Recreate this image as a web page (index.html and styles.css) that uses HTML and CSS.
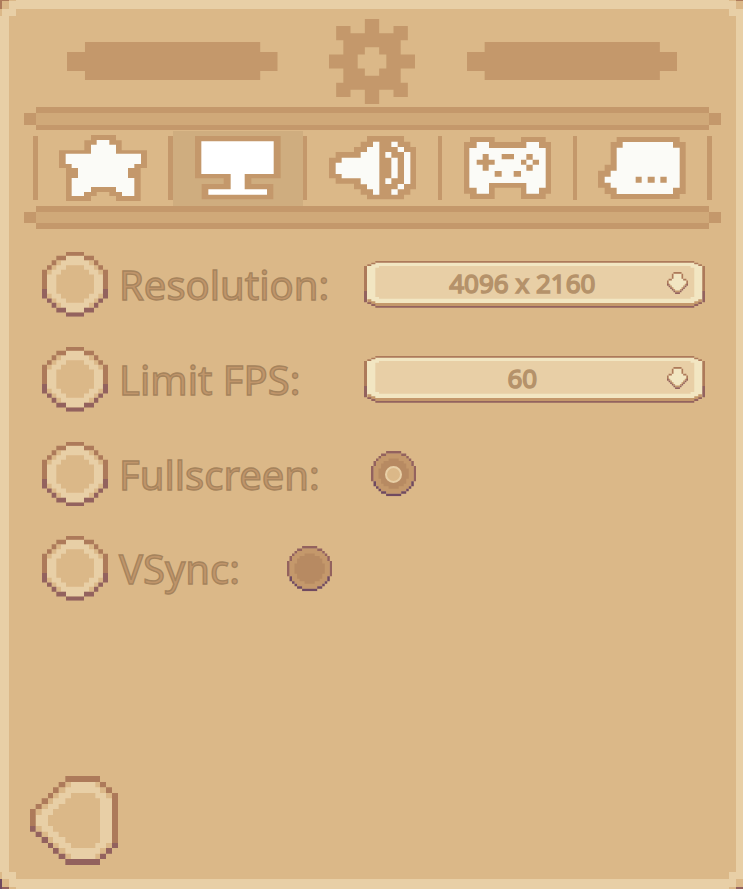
FILE: index.html
```html
<!DOCTYPE html>
<html lang="en">
<head>
<meta charset="utf-8">
<title>Display settings</title>
<link rel="stylesheet" href="styles.css">
</head>
<body>
<svg class="defs" width="0" height="0">
  <symbol id="knob" viewBox="35 36 199 194" preserveAspectRatio="none">
    <path class="light" d="M107 47H161V61H191V76H204V89H218V175H204V188H191V203H161V217H107V203H78V188H64V175H50V89H64V76H78V61H107Z"/>
    <path class="tan" d="M107 76H161V89H176V103H191V161H176V175H161V188H107V175H92V161H78V103H92V89H107Z"/>
    <path class="tan" d="M78 61H92V76H78ZM64 76H78V89H64ZM50 89H64V103H50ZM176 61H191V76H176ZM191 76H204V89H191ZM204 89H218V103H204ZM50 161H64V175H50ZM64 175H78V188H64ZM78 188H92V203H78ZM204 161H218V175H204ZM191 175H204V188H191ZM176 188H191V203H176Z"/>
    <path class="brown" d="M107 36H161V47H107ZM78 47H107V61H78ZM161 47H191V61H161ZM64 61H78V76H64ZM191 61H204V76H191ZM50 76H64V89H50ZM204 76H218V89H204ZM35 89H50V147H35ZM218 89H234V147H218Z"/>
    <path class="plum" d="M35 147H50V175H35ZM218 147H234V175H218ZM50 175H64V188H50ZM204 175H218V188H204ZM64 188H78V203H64ZM191 188H204V203H191ZM78 203H107V217H78ZM161 203H191V217H161ZM107 217H161V230H107Z"/>
  </symbol>
  <symbol id="field" viewBox="25 33 1026 141" preserveAspectRatio="none">
    <path class="cream" d="M59 36H1017V42H1034V48H1044V157H1029V168H47V157H32V48H42V42H59Z"/>
    <path class="light" d="M70 48H1006V53H1017V141H1006V146H70V141H59V53H70Z"/>
    <path class="dark" d="M59 159H1017V154H1029V148H1040V160H1029V168H47V160H35V148H47V154H59Z"/>
    <path class="brown" d="M59 33H1017V38H59ZM47 38H59V43H47ZM35 43H47V48H35ZM1017 38H1029V43H1017ZM1029 43H1040V48H1029ZM25 48H34V123H25ZM1041 48H1051V123H1041Z"/>
    <path class="plum" d="M25 123H34V157H25ZM1041 123H1051V157H1041ZM35 157H47V162H35ZM47 162H59V168H47ZM1029 157H1040V162H1029ZM1017 162H1029V168H1017ZM59 168H1017V173H59Z"/>
  </symbol>
  <symbol id="arrow" viewBox="0 0 13 13" preserveAspectRatio="none">
    <path class="cream" d="M4 1H9V4H11V5H12V8H11V9H10V10H9V11H8V12H5V11H4V10H3V9H2V8H1V5H2V4H4Z"/>
    <path class="dark" d="M1 7H2V8H3V9H4V10H5V11H8V10H9V9H10V8H11V7H12V8H11V9H10V10H9V11H8V12H5V11H4V10H3V9H2V8H1Z"/>
    <path class="brown" d="M4 0H9V1H4ZM3 1H4V4H3ZM9 1H10V4H9ZM1 4H3V5H1ZM10 4H12V5H10ZM0 5H1V8H0ZM12 5H13V8H12Z"/>
    <path class="plum" d="M0 7H1V8H0ZM12 7H13V8H12ZM1 8H2V9H1ZM11 8H12V9H11ZM2 9H3V10H2ZM10 9H11V10H10ZM3 10H4V11H3ZM9 10H10V11H9ZM4 11H5V12H4ZM8 11H9V12H8ZM5 12H8V13H5Z"/>
  </symbol>
  <symbol id="radio" viewBox="0 0 18 18" preserveAspectRatio="none">
    <path class="dark" d="M6 1H12V2H14V3H15V4H16V6H17V12H16V14H15V15H14V16H12V17H6V16H4V15H3V14H2V12H1V6H2V4H3V3H4V2H6Z"/>
    <path class="well" d="M7 3H11V4H13V5H14V7H15V11H14V13H13V14H11V15H7V14H5V13H4V11H3V7H4V5H5V4H7Z"/>
    <path class="plum" d="M6 0H12V1H6ZM4 1H6V2H4ZM12 1H14V2H12ZM3 2H4V3H3ZM14 2H15V3H14ZM2 3H3V4H2ZM15 3H16V4H15ZM1 4H2V6H1ZM16 4H17V6H16ZM0 6H1V12H0ZM17 6H18V12H17Z"/>
    <path class="shadow" d="M1 12H2V14H1ZM16 12H17V14H16ZM2 14H3V15H2ZM15 14H16V15H15ZM3 15H4V16H3ZM14 15H15V16H14ZM4 16H6V17H4ZM12 16H14V17H12ZM6 17H12V18H6Z"/>
  </symbol>
</svg>

<main class="panel">
  <svg class="corner top-left" viewBox="0 0 16 16"><path class="tan" d="M0 0H16V1H9V9H2V16H0Z"/><path class="brown" d="M0 0H9V1H2V9H0Z"/><path class="light" d="M9 9H16V16H9Z"/></svg>
  <svg class="corner top-right" viewBox="0 0 14 16"><path class="tan" d="M0 0H14V9H7V1H0Z"/><path class="brown" d="M7 0H14V1H7Z"/><path class="light" d="M0 9H7V16H0Z"/></svg>
  <svg class="corner bottom-left" viewBox="0 0 16 17"><path class="tan" d="M0 0H2V7H9V15H16V17H0Z"/><path class="plum" d="M2 15H9V17H2Z"/><path class="shadow" d="M0 7H2V17H0Z"/><path class="light" d="M9 0H16V7H9Z"/></svg>
  <svg class="corner bottom-right" viewBox="0 0 14 17"><path class="tan" d="M7 7H14V15H7ZM0 15H7V17H0Z"/><path class="plum" d="M7 15H14V17H7Z"/><path class="light" d="M0 0H7V7H0Z"/></svg>

  <header class="header">
    <svg class="plate" viewBox="0 0 632 114" preserveAspectRatio="none"><path class="dark" d="M54 0H580V30H632V87H580V114H54V87H0V30H54Z"/></svg>
    <svg class="gear" viewBox="0 0 12 12" preserveAspectRatio="none"><path class="dark" fill-rule="evenodd" d="M5 0H7V2H9V1H11V3H10V5H12V7H10V9H11V11H9V10H7V12H5V10H3V11H1V9H2V7H0V5H2V3H1V1H3V2H5ZM5 4V5H4V7H5V8H7V7H8V5H7V4Z"/></svg>
    <svg class="plate" viewBox="0 0 632 114" preserveAspectRatio="none"><path class="dark" d="M53 0H579V30H632V87H579V114H53V87H0V30H53Z"/></svg>
  </header>

  <div class="rail"><i class="cap"></i><i class="beam"></i><i class="cap"></i></div>
  <nav class="tabs">
    <i class="divider"></i>
    <a class="tab"><svg class="star" viewBox="116 104 264 198" preserveAspectRatio="none">
      <path class="dark" d="M212 104H287V120H304V150H380V203H361V302H287V287H267V275H229V287H212V302H137V203H116V150H192V120H212Z"/>
      <path class="white" d="M229 119H267V133H287V160H362V191H342V203H323V233H342V287H305V275H287V260H212V275H191V287H154V233H173V203H154V191H136V160H212V133H229Z"/></svg></a>
    <i class="divider"></i>
    <a class="tab selected"><svg class="monitor" viewBox="105 33 257 190" preserveAspectRatio="none">
      <path class="dark" d="M105 33H362V160H274V177H340V223H125V177H191V160H105Z"/>
      <path class="pure" d="M124 49H341V147H254V193H321V209H145V193H212V147H124Z"/></svg></a>
    <i class="divider"></i>
    <a class="tab"><svg class="speaker" viewBox="86 33 263 190" preserveAspectRatio="none">
      <path class="dark" d="M200 33H311V50H330V66H349V193H330V209H311V223H200V209H181V193H161V176H106V160H86V98H106V81H161V66H181V50H200Z"/>
      <path class="white" d="M218 50H237V209H218V193H200V178H181V160H124V147H106V113H124V98H181V81H200V66H218ZM255 81H273V98H255ZM273 98H292V160H273ZM255 160H273V177H255ZM273 50H292V66H273ZM292 66H311V81H292ZM311 81H330V177H311ZM292 177H311V193H292ZM273 193H292V209H273Z"/></svg></a>
    <i class="divider"></i>
    <a class="tab"><svg class="gamepad" viewBox="86 36 263 187" preserveAspectRatio="none">
      <path class="dark" d="M104 36H178V51H257V36H331V51H349V206H331V223H257V188H178V223H104V206H86V51H104Z"/>
      <path class="white" d="M124 51H161V69H273V51H311V69H331V188H311V206H273V174H161V206H124V188H102V69H124Z"/>
      <path class="dark" d="M142 87H160V104H178V119H160V137H142V119H124V104H142ZM199 87H236V103H199ZM273 87H292V104H273ZM257 104H273V119H257ZM292 104H311V119H292ZM273 119H292V137H273ZM178 138H199V155H178ZM235 138H257V155H235Z"/></svg></a>
    <i class="divider"></i>
    <a class="tab"><svg class="bubble" viewBox="86 111 263 188" preserveAspectRatio="none">
      <path class="dark" d="M142 111H331V126H349V282H331V299H124V282H106V263H86V212H106V194H124V126H142Z"/>
      <path class="white" d="M160 126H311V143H331V263H311V282H142V263H124V248H106V230H124V212H142V143H160Z"/>
      <path class="dark" d="M199 230H217V248H199ZM235 230H256V248H235ZM273 230H292V248H273Z"/></svg></a>
    <i class="divider"></i>
  </nav>
  <div class="rail lower"><i class="cap"></i><i class="beam"></i><i class="cap"></i></div>

  <section class="rows">
    <div class="row"><svg class="knob"><use href="#knob"/></svg><span class="label resolution">Resolution:</span>
      <div class="select"><svg class="frame"><use href="#field"/></svg><span class="value">4096 x 2160</span><svg class="arrow"><use href="#arrow"/></svg></div></div>
    <div class="row"><svg class="knob"><use href="#knob"/></svg><span class="label fps">Limit FPS:</span>
      <div class="select"><svg class="frame"><use href="#field"/></svg><span class="value">60</span><svg class="arrow"><use href="#arrow"/></svg></div></div>
    <div class="row"><svg class="knob"><use href="#knob"/></svg><span class="label fullscreen">Fullscreen:</span>
      <span class="toggle"><svg class="radio"><use href="#radio"/></svg><i class="dot"></i></span></div>
    <div class="row"><svg class="knob"><use href="#knob"/></svg><span class="label vsync">VSync:</span>
      <span class="toggle"><svg class="radio"><use href="#radio"/></svg></span></div>
  </section>

  <footer class="footer">
    <svg class="back" viewBox="89 33 264 267" preserveAspectRatio="none">
      <path class="light" d="M195 51H299V67H317V84H335V249H317V266H299V282H195V266H175V249H158V234H143V216H124V200H106V132H124V117H143V100H158V84H175V67H195Z"/>
      <path class="tan" d="M212 84H285V100H299V234H285V249H212V234H195V216H175V200H158V183H143V150H158V132H175V117H195V100H212Z"/>
      <path class="tan" d="M195 51H212V67H195ZM175 67H195V84H175ZM158 84H175V100H158ZM143 100H158V117H143ZM124 117H143V132H124ZM106 132H124V150H106ZM285 51H299V67H285ZM299 67H317V84H299ZM317 84H335V100H317ZM106 183H124V200H106ZM124 200H143V216H124ZM143 216H158V234H143ZM158 234H175V249H158ZM175 249H195V266H175ZM195 266H212V282H195ZM285 266H299V282H285ZM299 249H317V266H299ZM317 234H335V249H317Z"/>
      <path class="brown" d="M195 33H299V51H195ZM175 51H195V67H175ZM299 51H317V67H299ZM158 67H175V84H158ZM317 67H335V84H317ZM143 84H158V100H143ZM335 84H353V234H335ZM124 100H143V117H124ZM106 117H124V132H106ZM89 132H106V183H89Z"/>
      <path class="plum" d="M335 234H353V249H335ZM89 183H106V200H89ZM106 200H124V216H106ZM124 216H143V234H124ZM143 234H158V249H143ZM158 249H175V266H158ZM317 249H335V266H317ZM175 266H195V282H175ZM299 266H317V282H299ZM195 282H299V300H195Z"/>
    </svg>
  </footer>
</main>
</body>
</html>
```
FILE: styles.css
```css
* { box-sizing: border-box; }
body { margin: 0; background: #dbb888; font-family: "Noto Sans", "Open Sans", sans-serif; }
svg { display: block; flex: none; }
.defs { position: absolute; }
.light { fill: #e8cfa6; }
.tan { fill: #dbb888; }
.cream { fill: #f2e6c2; }
.dark { fill: #c4986b; }
.brown { fill: #ad7a5a; }
.plum { fill: #93625e; }
.shadow { fill: #704a60; }
.well { fill: #b78a62; }
.white { fill: #fbfbf7; }
.pure { fill: #fff; }

.panel {
  position: relative;
  display: flex;
  flex-direction: column;
  width: 743px;
  height: 889px;
  background: #dbb888;
  border: solid #e8cfa6;
  border-width: 9px 7px 10px 9px;
}
.corner { position: absolute; }
.top-left { top: -9px; left: -9px; width: 16px; height: 16px; }
.top-right { top: -9px; right: -7px; width: 14px; height: 16px; }
.bottom-left { bottom: -10px; left: -9px; width: 16px; height: 17px; }
.bottom-right { bottom: -10px; right: -7px; width: 14px; height: 17px; }

.header {
  display: flex;
  justify-content: space-between;
  height: 98px;
  padding: 10px 58.7px 0 58px;
}
.plate { width: 210.5px; height: 38px; margin-top: 23px; }
.gear { width: 86px; height: 85px; }

.rail { display: flex; align-items: flex-start; height: 23px; padding: 0 15px; }
.cap { width: 12px; height: 12px; margin-top: 6px; background: #c4986b; }
.beam {
  flex: none;
  width: 673px;
  height: 23px;
  background: #d0a979;
  border: solid #c4986b;
  border-width: 6px 0 5px;
}
.lower .cap { height: 11px; }
.lower .beam { border-bottom-width: 6px; }
.tabs { display: flex; align-items: center; height: 76px; padding-left: 24px; }
.divider { flex: none; width: 4.7px; height: 64.5px; background: #c4986b; }
.tab { display: flex; flex: none; justify-content: center; align-items: center; width: 130.2px; height: 75px; }
.selected { background: #cfad7f; }
.star { width: 88px; height: 66px; }
.monitor { width: 85.7px; height: 63.3px; }
.speaker { width: 87.7px; height: 63.3px; }
.gamepad { width: 87.7px; height: 62.3px; }
.bubble { width: 87.7px; height: 62.7px; }

.rows { display: flex; flex-direction: column; gap: 30px; padding: 23px 0 0 32.5px; }
.row { display: flex; height: 64.8px; }
.knob { width: 66.3px; height: 64.8px; }
.label {
  flex: none;
  margin-left: 11.2px;
  font-size: 40px;
  line-height: 65px;
  color: #c0956a;
  -webkit-text-stroke: 1.3px #a5835c;
  white-space: nowrap;
}
.resolution, .fps { width: 244.6px; }
.fullscreen { width: 251.6px; }
.vsync { width: 167.6px; }
.select {
  position: relative;
  display: flex;
  align-items: center;
  width: 341.6px;
  height: 47px;
  margin-top: 9px;
  padding: 0 17px 3px 14px;
}
.frame { position: absolute; inset: 0; width: 100%; height: 100%; }
.value {
  position: relative;
  flex: 1;
  text-align: center;
  font-size: 26px;
  font-weight: 400;
  line-height: 44px;
  color: #b5926a;
  -webkit-text-stroke: 1.5px #b5926a;
}
.arrow { position: relative; width: 21px; height: 22px; }
.toggle { position: relative; width: 45.3px; height: 45.3px; margin-top: 9.9px; }
.radio { width: 100%; height: 100%; }
.dot {
  position: absolute;
  top: 14.3px;
  left: 14.3px;
  width: 17px;
  height: 17px;
  border: 2.5px solid #e8cfa6;
  border-radius: 50%;
  background: #dbb888;
}
.footer { margin-top: auto; padding: 0 0 14px 20.7px; }
.back { width: 88px; height: 89px; }
```
